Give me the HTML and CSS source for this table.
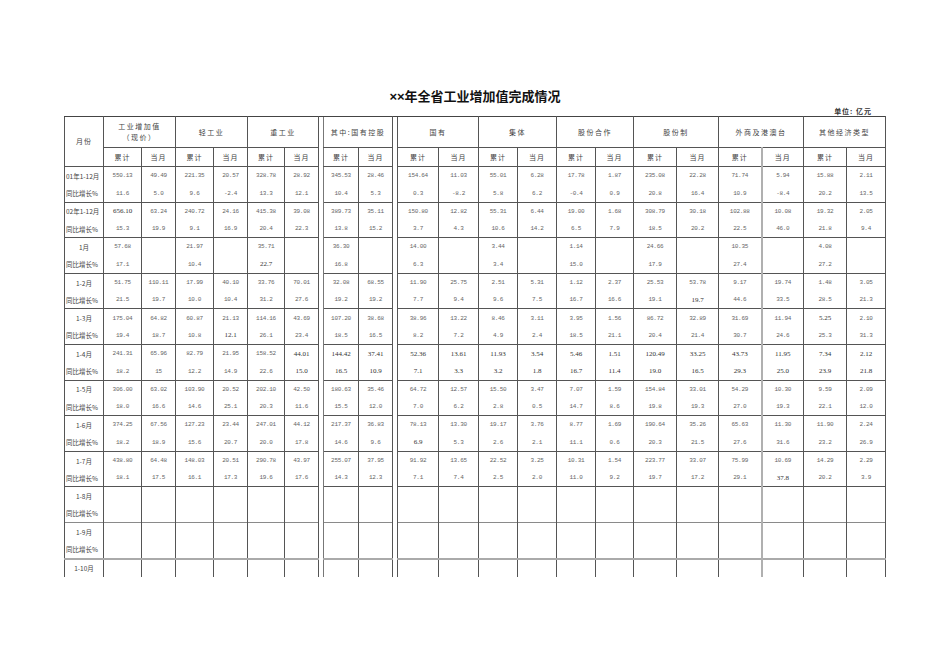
FILE: index.html
```html
<!DOCTYPE html>
<html lang="zh">
<head>
<meta charset="utf-8">
<link rel="stylesheet" href="styles.css">
</head>
<body>
<h1 class="title">××年全省工业增加值完成情况</h1>
<div class="unit">单位: 亿元</div>
<div class="clip">
<table class="grid">
<colgroup>
<col style="width:39px"><col style="width:38px"><col style="width:34px"><col style="width:38px"><col style="width:34px"><col style="width:37px"><col style="width:34px"><col style="width:5px"><col style="width:35px"><col style="width:34px"><col style="width:5px"><col style="width:41px"><col style="width:40px"><col style="width:39px"><col style="width:39px"><col style="width:39px"><col style="width:38px"><col style="width:43px"><col style="width:42px"><col style="width:43px"><col style="width:42px"><col style="width:43px"><col style="width:39px">
</colgroup>
<tr class="h1">
<td class="hd" rowspan="2">月份</td>
<td class="hd" colspan="2">工业增加值<br>（现价）</td>
<td class="hd" colspan="2">轻工业</td>
<td class="hd" colspan="2">重工业</td>
<td class="gap" rowspan="26"></td>
<td class="hd gl" colspan="2">其中:国有控股</td>
<td class="gap" rowspan="26"></td>
<td class="hd" colspan="2">国有</td>
<td class="hd" colspan="2">集体</td>
<td class="hd" colspan="2">股份合作</td>
<td class="hd" colspan="2">股份制</td>
<td class="hd" colspan="2">外商及港澳台</td>
<td class="hd" colspan="2">其他经济类型</td>
</tr>
<tr class="h2">
<td class="hd">累计</td><td class="hd">当月</td><td class="hd">累计</td><td class="hd">当月</td><td class="hd">累计</td><td class="hd">当月</td>
<td class="hd gl">累计</td><td class="hd">当月</td>
<td class="hd">累计</td><td class="hd">当月</td><td class="hd">累计</td><td class="hd">当月</td><td class="hd">累计</td><td class="hd">当月</td><td class="hd">累计</td><td class="hd">当月</td><td class="hd">累计</td><td class="hd dl">当月</td><td class="hd">累计</td><td class="hd">当月</td>
</tr>

<tr class="g"><td class="lb">01年1-12月</td><td>550.13</td><td>49.49</td><td>221.35</td><td>20.57</td><td>328.78</td><td>28.92</td><td class="gl">345.53</td><td>28.46</td><td>154.64</td><td>11.03</td><td>55.01</td><td>6.28</td><td>17.78</td><td>1.87</td><td>235.08</td><td>22.28</td><td>71.74</td><td class="dl">5.94</td><td>15.88</td><td>2.11</td></tr>
<tr><td class="lb">同比增长%</td><td>11.6</td><td>5.0</td><td>9.6</td><td>-2.4</td><td>13.3</td><td>12.1</td><td class="gl">10.4</td><td>5.3</td><td>0.3</td><td>-8.2</td><td>5.8</td><td>6.2</td><td>-0.4</td><td>0.9</td><td>20.8</td><td>16.4</td><td>10.9</td><td class="dl">-8.4</td><td>20.2</td><td>13.5</td></tr>

<tr class="g"><td class="lb">02年1-12月</td><td class="b">656.10</td><td>63.24</td><td>240.72</td><td>24.16</td><td>415.38</td><td>39.08</td><td class="gl">389.73</td><td>35.11</td><td>150.80</td><td>12.82</td><td>55.31</td><td>6.44</td><td>19.00</td><td>1.68</td><td>308.79</td><td>30.18</td><td>102.88</td><td class="dl">10.08</td><td>19.32</td><td>2.05</td></tr>
<tr><td class="lb">同比增长%</td><td>15.3</td><td>19.9</td><td>9.1</td><td>16.9</td><td>20.4</td><td>22.3</td><td class="gl">13.8</td><td>15.2</td><td>3.7</td><td>4.3</td><td>10.6</td><td>14.2</td><td>6.5</td><td>7.9</td><td>18.5</td><td>20.2</td><td>22.5</td><td class="dl">46.0</td><td>21.8</td><td>9.4</td></tr>

<tr class="g"><td class="lb c">1月</td><td>57.68</td><td></td><td>21.97</td><td></td><td>35.71</td><td></td><td class="gl">36.30</td><td></td><td>14.00</td><td></td><td>3.44</td><td></td><td>1.14</td><td></td><td>24.66</td><td></td><td>10.35</td><td class="dl"></td><td>4.08</td><td></td></tr>
<tr><td class="lb">同比增长%</td><td>17.1</td><td></td><td>10.4</td><td></td><td class="b">22.7</td><td></td><td class="gl">16.8</td><td></td><td>6.3</td><td></td><td>3.4</td><td></td><td>15.0</td><td></td><td>17.9</td><td></td><td>27.4</td><td class="dl"></td><td>27.2</td><td></td></tr>

<tr class="g"><td class="lb c">1-2月</td><td>51.75</td><td>110.11</td><td>17.99</td><td>40.10</td><td>33.76</td><td>70.01</td><td class="gl">32.08</td><td>68.55</td><td>11.90</td><td>25.75</td><td>2.51</td><td>5.31</td><td>1.12</td><td>2.37</td><td>25.53</td><td>53.78</td><td>9.17</td><td class="dl">19.74</td><td>1.48</td><td>3.05</td></tr>
<tr><td class="lb">同比增长%</td><td>21.5</td><td>19.7</td><td>10.0</td><td>10.4</td><td>31.2</td><td>27.6</td><td class="gl">19.2</td><td>19.2</td><td>7.7</td><td>9.4</td><td>9.6</td><td>7.5</td><td>16.7</td><td>16.6</td><td>19.1</td><td class="b">19.7</td><td>44.6</td><td class="dl">33.5</td><td>28.5</td><td>21.3</td></tr>

<tr class="g"><td class="lb c">1-3月</td><td>175.04</td><td>64.82</td><td>60.87</td><td>21.13</td><td>114.16</td><td>43.69</td><td class="gl">107.20</td><td>38.68</td><td>38.96</td><td>13.22</td><td>8.46</td><td>3.11</td><td>3.95</td><td>1.56</td><td>86.72</td><td>32.89</td><td>31.69</td><td class="dl">11.94</td><td class="b">5.25</td><td>2.10</td></tr>
<tr><td class="lb">同比增长%</td><td>19.4</td><td>18.7</td><td>10.8</td><td class="b">12.1</td><td>26.1</td><td>23.4</td><td class="gl">18.5</td><td>16.5</td><td>8.2</td><td>7.2</td><td>4.9</td><td>2.4</td><td>18.5</td><td>21.1</td><td>20.4</td><td>21.4</td><td>30.7</td><td class="dl">24.6</td><td>25.3</td><td>31.3</td></tr>

<tr class="g"><td class="lb c">1-4月</td><td>241.31</td><td>65.96</td><td>82.79</td><td>21.95</td><td>158.52</td><td class="b">44.01</td><td class="gl b">144.42</td><td class="b">37.41</td><td class="b">52.36</td><td class="b">13.61</td><td class="b">11.93</td><td class="b">3.54</td><td class="b">5.46</td><td class="b">1.51</td><td class="b">120.49</td><td class="b">33.25</td><td class="b">43.73</td><td class="dl b">11.95</td><td class="b">7.34</td><td class="b">2.12</td></tr>
<tr><td class="lb">同比增长%</td><td>18.2</td><td>15</td><td>12.2</td><td>14.9</td><td>22.6</td><td class="b">15.0</td><td class="gl b">16.5</td><td class="b">10.9</td><td class="b">7.1</td><td class="b">3.3</td><td class="b">3.2</td><td class="b">1.8</td><td class="b">16.7</td><td class="b">11.4</td><td class="b">19.0</td><td class="b">16.5</td><td class="b">29.3</td><td class="dl b">25.0</td><td class="b">23.9</td><td class="b">21.8</td></tr>

<tr class="g"><td class="lb c">1-5月</td><td>306.00</td><td>63.02</td><td>103.90</td><td>20.52</td><td>202.10</td><td>42.50</td><td class="gl">180.63</td><td>35.46</td><td>64.72</td><td>12.57</td><td>15.50</td><td>3.47</td><td>7.07</td><td>1.59</td><td>154.84</td><td>33.01</td><td>54.29</td><td class="dl">10.30</td><td>9.59</td><td>2.09</td></tr>
<tr><td class="lb">同比增长%</td><td>18.0</td><td>16.6</td><td>14.6</td><td>25.1</td><td>20.3</td><td>11.6</td><td class="gl">15.5</td><td>12.0</td><td>7.0</td><td>6.2</td><td>2.8</td><td>0.5</td><td>14.7</td><td>8.6</td><td>19.8</td><td>19.3</td><td>27.0</td><td class="dl">19.3</td><td>22.1</td><td>12.0</td></tr>

<tr class="g"><td class="lb c">1-6月</td><td>374.25</td><td>67.56</td><td>127.23</td><td>23.44</td><td>247.01</td><td>44.12</td><td class="gl">217.37</td><td>36.83</td><td>78.13</td><td>13.30</td><td>19.17</td><td>3.76</td><td>8.77</td><td>1.69</td><td>190.64</td><td>35.26</td><td>65.63</td><td class="dl">11.30</td><td>11.90</td><td>2.24</td></tr>
<tr><td class="lb">同比增长%</td><td>18.2</td><td>18.9</td><td>15.6</td><td>20.7</td><td>20.0</td><td>17.8</td><td class="gl">14.6</td><td>9.6</td><td class="b">6.9</td><td>5.3</td><td>2.6</td><td>2.1</td><td>11.1</td><td>0.6</td><td>20.3</td><td>21.5</td><td>27.6</td><td class="dl">31.6</td><td>23.2</td><td>26.9</td></tr>

<tr class="g"><td class="lb c">1-7月</td><td>438.80</td><td>64.48</td><td>148.03</td><td>20.51</td><td>290.78</td><td>43.97</td><td class="gl">255.07</td><td>37.95</td><td>91.92</td><td>13.65</td><td>22.52</td><td>3.25</td><td>10.31</td><td>1.54</td><td>223.77</td><td>33.07</td><td>75.99</td><td class="dl">10.69</td><td>14.29</td><td>2.29</td></tr>
<tr><td class="lb">同比增长%</td><td>18.1</td><td>17.5</td><td>16.1</td><td>17.3</td><td>19.6</td><td>17.6</td><td class="gl">14.3</td><td>12.3</td><td>7.1</td><td>7.4</td><td>2.5</td><td>2.0</td><td>11.0</td><td>9.2</td><td>19.7</td><td>17.2</td><td>29.1</td><td class="dl b">37.8</td><td>20.2</td><td>3.9</td></tr>

<tr class="g"><td class="lb c">1-8月</td><td></td><td></td><td></td><td></td><td></td><td></td><td class="gl"></td><td></td><td></td><td></td><td></td><td></td><td></td><td></td><td></td><td></td><td></td><td class="dl"></td><td></td><td></td></tr>
<tr><td class="lb">同比增长%</td><td></td><td></td><td></td><td></td><td></td><td></td><td class="gl"></td><td></td><td></td><td></td><td></td><td></td><td></td><td></td><td></td><td></td><td></td><td class="dl"></td><td></td><td></td></tr>

<tr class="g g9"><td class="lb c">1-9月</td><td></td><td></td><td></td><td></td><td></td><td></td><td class="gl"></td><td></td><td></td><td></td><td></td><td></td><td></td><td></td><td></td><td></td><td></td><td class="dl"></td><td></td><td></td></tr>
<tr><td class="lb">同比增长%</td><td></td><td></td><td></td><td></td><td></td><td></td><td class="gl"></td><td></td><td></td><td></td><td></td><td></td><td></td><td></td><td></td><td></td><td></td><td class="dl"></td><td></td><td></td></tr>

<tr class="g g10"><td class="lb c">1-10月</td><td></td><td></td><td></td><td></td><td></td><td></td><td class="gl"></td><td></td><td></td><td></td><td></td><td></td><td></td><td></td><td></td><td></td><td></td><td class="dl"></td><td></td><td></td></tr>
</table>
</div>
</body>
</html>
```

FILE: styles.css
```css
html, body {
  margin: 0;
  padding: 0;
  background: #ffffff;
}

body {
  font-family: "Noto Sans CJK SC", "Noto Sans", sans-serif;
  color: #333;
}

.title {
  margin: 0;
  padding-top: 88px;
  height: 18px;
  line-height: 18px;
  font-family: "Liberation Sans", "Noto Sans CJK SC", sans-serif;
  font-size: 13px;
  font-weight: 700;
  text-align: center;
  color: #111;
}

.unit {
  height: 10px;
  line-height: 10px;
  font-size: 7px;
  font-weight: 700;
  letter-spacing: 1px;
  text-align: right;
  padding-right: 78px;
  color: #333;
}

.clip {
  margin-left: 64px;
  width: 824px;
  height: 462px;
  overflow: hidden;
}

.grid {
  border-collapse: collapse;
  table-layout: fixed;
  width: 821px;
  border-top: 1px solid #444;
}

.grid td {
  border-left: 1px solid #555;
  border-right: 1px solid #555;
  padding: 0;
  height: 17px;
  text-align: center;
  vertical-align: middle;
  font-family: "Liberation Mono", "DejaVu Sans Mono", monospace;
  font-size: 6px;
  letter-spacing: -0.3px;
  color: #666;
  white-space: nowrap;
  overflow: hidden;
}

.grid tr.g td {
  height: 17.6px;
  border-top: 1px solid #555;
}

.grid tr.g9 td {
  border-top: 1px solid #8a8a8a;
}

.grid tr.g10 td {
  border-top: 2px solid #aaa;
}

.grid td.b {
  font-family: "Liberation Serif", "DejaVu Serif", serif;
  font-size: 7px;
  letter-spacing: 0;
  color: #333;
}

.grid td.hd {
  font-family: "Noto Sans CJK SC", sans-serif;
  font-size: 7px;
  letter-spacing: 1px;
  line-height: 11px;
  color: #444;
  border-bottom: 1px solid #555;
}

.grid tr.h1 td {
  height: 30px;
  border-top: 1px solid #444;
}

.grid tr.h1 td.hd[colspan] {
  letter-spacing: 1.5px;
}

.grid tr.h2 td {
  height: 18px;
}

.grid td.lb {
  font-family: "Noto Sans CJK SC", sans-serif;
  font-size: 6.5px;
  letter-spacing: 0;
  color: #444;
  text-align: left;
  padding-left: 1px;
}

.grid td.lb.c {
  text-align: center;
  padding-left: 0;
}

.grid td.gap {
  border: none;
  border-top: 1px solid #444;
}

.grid td.gl {
  border-left: 1px solid #777;
}

.grid td.dl {
  border-left: 2px solid #b0b0b0;
}
```
